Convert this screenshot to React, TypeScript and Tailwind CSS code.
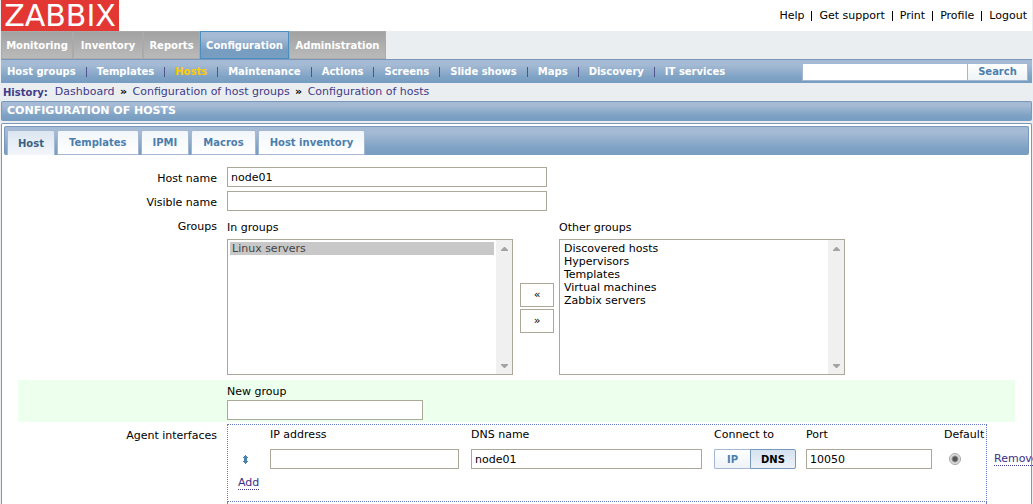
import { Fragment } from "react";
import type { ReactNode } from "react";

const topLinks = ["Help", "Get support", "Print", "Profile", "Logout"];
const mainMenu = [
  { name: "Monitoring", width: "w-[72px]" },
  { name: "Inventory", width: "w-[70px]" },
  { name: "Reports", width: "w-[57px]" },
  { name: "Configuration", width: "w-[89px]" },
  { name: "Administration", width: "w-[97px]" },
];
const subMenu = [
  "Host groups",
  "Templates",
  "Hosts",
  "Maintenance",
  "Actions",
  "Screens",
  "Slide shows",
  "Maps",
  "Discovery",
  "IT services",
];
const crumbs = ["Dashboard", "Configuration of host groups", "Configuration of hosts"];
const tabs = ["Host", "Templates", "IPMI", "Macros", "Host inventory"];
const otherGroups = ["Discovered hosts", "Hypervisors", "Templates", "Virtual machines", "Zabbix servers"];

const field = "block h-5 border border-[#aca899] bg-white px-[3px] text-[11px] leading-4 text-black outline-none";
const moveButton = "box-content h-[22px] w-8 border border-[#aca899] bg-white";
const bar = "bg-linear-to-b from-[#a5bad4] from-20% via-[#7ea2c4] via-75% to-[#779dc1]";

function Row({ label, htmlFor, children }: { label?: string; htmlFor?: string; children: ReactNode }) {
  return (
    <div className="flex items-start">
      <div className="w-[199px] shrink-0 pt-1 text-right leading-4">
        {label && <label htmlFor={htmlFor}>{label}</label>}
      </div>
      <div className="ml-[10px] shrink-0">{children}</div>
    </div>
  );
}

function ListBox({ id, label, items, selected }: { id: string; label: string; items: string[]; selected: string[] }) {
  return (
    <div>
      <label htmlFor={id} className="block h-5 pt-px leading-4">
        {label}
      </label>
      <div className="flex h-[136px] w-[286px] border border-[#aca899]">
        <select
          id={id}
          multiple
          defaultValue={selected}
          className="min-w-0 flex-1 appearance-none overflow-hidden bg-white p-[2px] text-[11px] text-black outline-none"
        >
          {items.map((item) => (
            <option
              key={item}
              className="h-[13px] min-h-0 px-[2px] py-0 leading-[13px] checked:bg-[linear-gradient(#c8c8c8,#c8c8c8)] checked:text-[#444]"
            >
              {item}
            </option>
          ))}
        </select>
        <div className="flex w-4 flex-col items-center justify-between bg-[#f0f0f0] pt-[7px] pb-[6px]">
          <svg width="7" height="4" viewBox="0 0 7 4" fill="#a3a3a3">
            <path d="M3 0h1l3 3v1H0V3z" />
          </svg>
          <svg width="7" height="4" viewBox="0 0 7 4" fill="#a3a3a3">
            <path d="M0 0h7v1L4 4H3L0 1z" />
          </svg>
        </div>
      </div>
    </div>
  );
}

export default function App() {
  return (
    <div className="flex h-screen flex-col overflow-hidden bg-[#ebeef1] px-px font-['DejaVu_Sans',Verdana,sans-serif] text-[11px] text-black">
      <header className="flex h-[31px] shrink-0 items-center justify-between bg-white">
        <a href="#" className="flex h-[31px] w-[118px] items-center justify-center bg-[#e33734] text-[30px] leading-[31px] text-white">
          ZABBIX
        </a>
        <nav className="flex items-center pt-px pr-[5px]">
          {topLinks.map((link, i) => (
            <Fragment key={link}>
              {i > 0 && <span className="mx-[7px] h-[10px] w-px bg-black" />}
              <a href="#">{link}</a>
            </Fragment>
          ))}
        </nav>
      </header>

      <nav className="flex h-7 shrink-0 text-[10px] font-bold text-white">
        {mainMenu.map(({ name, width }) => (
          <a
            key={name}
            href="#"
            className={`flex items-center justify-center border ${width} ${
              name === "Configuration"
                ? "border-[#4b8ec0] bg-linear-to-b from-[#a5bad4] from-20% to-[#779dc1] to-70%"
                : "border-[#aaaaaa] bg-linear-to-b from-[#a2a2a2] to-[#bababa]"
            }`}
          >
            {name}
          </a>
        ))}
      </nav>

      <div className={`flex h-6 shrink-0 items-center justify-between border-t border-[#7a98b9] pr-1 ${bar}`}>
        <nav className="flex items-center pl-[6px] text-[10px] font-bold whitespace-nowrap text-white">
          {subMenu.map((item, i) => (
            <Fragment key={item}>
              {i > 0 && <span className="mx-[10px] h-[10px] w-px bg-[#51538c]" />}
              <a href="#" className={item === "Hosts" ? "text-[#ffcc00]" : ""}>
                {item}
              </a>
            </Fragment>
          ))}
        </nav>
        <form className="flex" onSubmit={(e) => e.preventDefault()}>
          <input
            aria-label="Search"
            className="h-[18px] w-[165px] border border-r-0 border-[#a4b8d2] bg-white px-1 outline-none"
          />
          <button className="h-[18px] w-[61px] border border-[#a4b8d2] bg-linear-to-b from-white to-[#eef3f7] text-[10px] font-bold text-[#4b7ead]">
            Search
          </button>
        </form>
      </div>

      <nav className="flex h-[18px] shrink-0 items-center pt-px pl-[2px] text-[#403b88]">
        <span className="mr-[7px] text-[10px] font-bold">History:</span>
        {crumbs.map((item, i) => (
          <Fragment key={item}>
            {i > 0 && <span className="w-[18px] text-center font-bold text-black">»</span>}
            <a href="#">{item}</a>
          </Fragment>
        ))}
      </nav>

      <h1
        className={`flex h-5 shrink-0 items-center rounded-xs border border-[#7a98b9] border-b-[#779dc1] pt-px pl-[5px] text-[11px] font-bold text-white ${bar}`}
      >
        CONFIGURATION OF HOSTS
      </h1>

      <main className="mt-[2px] flex min-h-0 flex-1 flex-col rounded-t-xs border border-b-0 border-[#7a98b9] bg-white p-[2px] pb-0">
        <div
          role="tablist"
          className={`flex h-[29px] shrink-0 items-end gap-[2px] rounded-xs border border-b-0 border-[#7a98b9] pl-[2px] text-[10px] font-bold ${bar}`}
        >
          {tabs.map((tab) => (
            <button
              key={tab}
              role="tab"
              aria-selected={tab === "Host"}
              className={
                tab === "Host"
                  ? "h-[25px] rounded-t-xs border border-b-0 border-[#a4b8d2] bg-linear-to-b from-[#dbe6f1] to-[#f3f6fa] px-[10px] text-[#3c5f80]"
                  : "h-[25px] rounded-t-xs border border-[#a4b8d2] bg-linear-to-b from-[#f2f6fa] to-white px-[11px] text-[#4b7ead]"
              }
            >
              {tab}
            </button>
          ))}
        </div>

        <form className="mx-[14px] mt-3 flex min-h-0 flex-1 flex-col gap-1 whitespace-nowrap" onSubmit={(e) => e.preventDefault()}>
          <Row label="Host name" htmlFor="host">
            <input id="host" defaultValue="node01" className={`${field} w-[320px]`} />
          </Row>
          <Row label="Visible name" htmlFor="visible">
            <input id="visible" className={`${field} w-[320px]`} />
          </Row>
          <Row label="Groups" htmlFor="in-groups">
            <div className="flex pt-1">
              <ListBox id="in-groups" label="In groups" items={["Linux servers"]} selected={["Linux servers"]} />
              <div className="mr-[5px] ml-[7px] flex flex-col gap-[2px] pt-16">
                <button aria-label="Add to groups" className={moveButton}>
                  «
                </button>
                <button aria-label="Remove from groups" className={moveButton}>
                  »
                </button>
              </div>
              <ListBox id="other-groups" label="Other groups" items={otherGroups} selected={[]} />
            </div>
          </Row>
          <div className="mt-px bg-[#edffed] pb-[2px]">
            <Row>
              <label htmlFor="new-group" className="block h-5 pt-1 leading-4">
                New group
              </label>
              <input id="new-group" className={`${field} w-[196px]`} />
            </Row>
          </div>
          <div className="-mt-[2px] min-h-0 flex-1">
            <Row label="Agent interfaces">
              <div className="h-[78px] w-[760px] border border-dotted border-[#6a7cc0]">
                <table className="w-[834px] table-fixed text-left">
                  <colgroup>
                    <col className="w-[42px]" />
                    <col className="w-[201px]" />
                    <col className="w-[243px]" />
                    <col className="w-[92px]" />
                    <col className="w-[138px]" />
                    <col className="w-[50px]" />
                    <col className="w-[68px]" />
                  </colgroup>
                  <thead>
                    <tr className="h-6 align-top leading-5 *:p-0 *:font-normal">
                      <th />
                      <th>IP address</th>
                      <th>DNS name</th>
                      <th>Connect to</th>
                      <th>Port</th>
                      <th>Default</th>
                      <th />
                    </tr>
                  </thead>
                  <tbody>
                    <tr className="h-5 *:p-0">
                      <td>
                        <svg className="ml-[14px]" width="7" height="9" viewBox="0 0 7 9" fill="#4b82ae">
                          <path d="M3 0h1v1h1v1h1v1H5v3h1v1H5v1H4v1H3V8H2V7H1V6h1V3H1V2h1V1h1z" />
                        </svg>
                      </td>
                      <td>
                        <input aria-label="IP address" className={`${field} w-[189px]`} />
                      </td>
                      <td>
                        <input aria-label="DNS name" defaultValue="node01" className={`${field} w-[231px]`} />
                      </td>
                      <td>
                        <div className="flex text-[10px] font-bold">
                          <button className="h-5 w-9 rounded-l-xs border border-r-0 border-[#a4b8d2] bg-linear-to-b from-white to-[#eef3f7] text-[#4b7ead]">
                            IP
                          </button>
                          <button className="h-5 w-[46px] rounded-r-xs border border-[#7a98b9] bg-linear-to-b from-[#d5e2ef] to-[#edf2f8] text-black">
                            DNS
                          </button>
                        </div>
                      </td>
                      <td>
                        <input aria-label="Port" defaultValue="10050" className={`${field} w-[126px]`} />
                      </td>
                      <td>
                        <input
                          type="radio"
                          aria-label="Default"
                          defaultChecked
                          className="ml-[5px] block size-3 appearance-none rounded-full border border-[#a8a8a8] bg-[radial-gradient(circle,#555_0_2px,#dedede_4px)]"
                        />
                      </td>
                      <td>
                        <a href="#" className="border-b border-dotted border-[#403b88] text-[#3c2f88]">
                          Remove
                        </a>
                      </td>
                    </tr>
                    <tr className="h-7 *:p-0">
                      <td colSpan={7} className="align-middle">
                        <a href="#" className="ml-[10px] border-b border-dotted border-[#403b88] text-[#3c2f88]">
                          Add
                        </a>
                      </td>
                    </tr>
                  </tbody>
                </table>
              </div>
              <div className="h-10 w-[760px] border-x border-dotted border-[#6a7cc0]" />
            </Row>
          </div>
        </form>
      </main>
    </div>
  );
}
